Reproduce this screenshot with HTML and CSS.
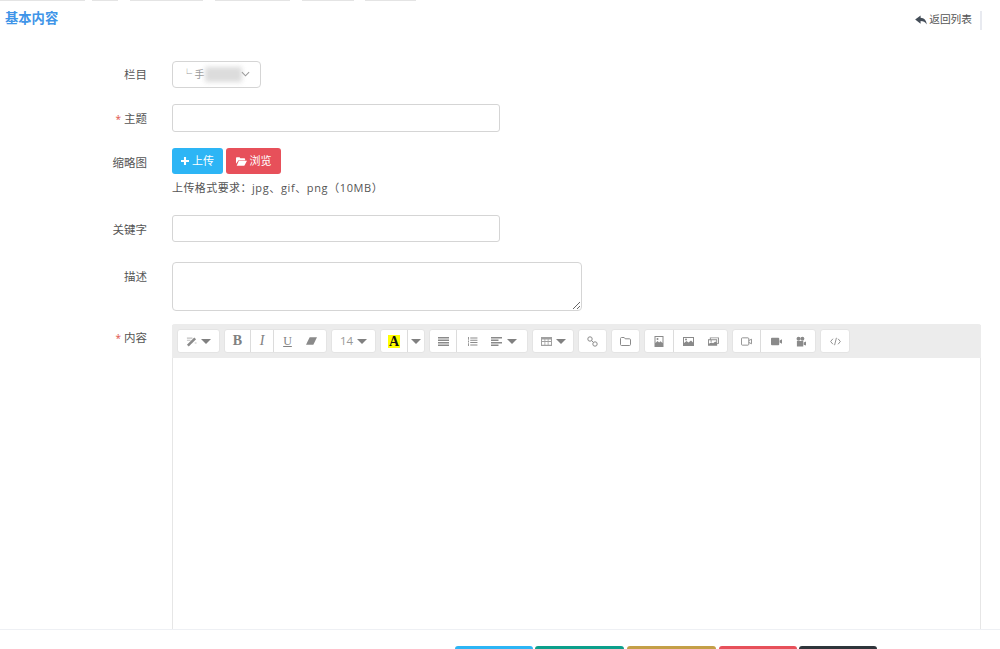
FILE: index.html
```html
<!DOCTYPE html>
<html lang="zh-CN">
<head>
<meta charset="utf-8">
<title>基本内容</title>
<link rel="stylesheet" href="styles.css">
</head>
<body>
<div class="page">
  <div class="tabs">
    <span class="tab t1"></span><span class="tab t2"></span><span class="tab t3"></span><span class="tab t4"></span><span class="tab t5"></span><span class="tab t6"></span>
  </div>
  <main class="main">
    <header class="head">
      <h1 class="title">基本内容</h1>
      <a class="back">
        <svg class="back-ico" viewBox="0 0 14 12"><path d="M6.500.5 0 5.500l6.500 5V7.300c3.200 0 5.500.8 7.300 4C13.500 6 10.500 3.500 6.500 3.300z"/></svg>
        <span>返回列表</span>
      </a>
    </header>
    <form class="form">
      <div class="row r-select">
        <label class="lbl">栏目</label>
        <div class="select">
          <span class="sel-text">└ 手</span><span class="smudge"></span>
          <svg class="chev" viewBox="0 0 10 6"><path d="M1 1l4 4 4-4"/></svg>
        </div>
      </div>
      <div class="row r-title">
        <label class="lbl"><i class="req">*</i> 主题</label>
        <input class="input" type="text">
      </div>
      <div class="row r-thumb">
        <label class="lbl">缩略图</label>
        <div class="thumb">
          <div class="btns">
            <button type="button" class="btn upload"><svg class="btn-ico" viewBox="0 0 10 10"><path d="M3.700 0h2.600v3.700H10v2.600H6.300V10H3.700V6.300H0V3.700h3.700z"/></svg>上传</button>
            <button type="button" class="btn browse"><svg class="btn-ico wide" viewBox="0 0 13 10"><path d="M0 1.200C0 .5.500 0 1.200 0h3l1 1.300h4.600c.6 0 1 .4 1 1V3.400H3L0 7.600zM3.400 4.200H13l-2.800 5.300-.5.5H.8z"/></svg>浏览</button>
          </div>
          <p class="help">上传格式要求：<span class="lat">jpg、gif、png（10MB）</span></p>
        </div>
      </div>
      <div class="row r-key">
        <label class="lbl">关键字</label>
        <input class="input" type="text">
      </div>
      <div class="row r-desc">
        <label class="lbl">描述</label>
        <textarea class="area"></textarea>
      </div>
      <div class="row r-editor">
        <label class="lbl"><i class="req">*</i> 内容</label>
        <div class="editor">
          <div class="toolbar">
            <div class="grp"><span class="tb w41 last">
              <svg class="ic wand" viewBox="0 0 12 11"><path d="M9 1 11 3 3 11 1 9z"/><path d="M1 1h6v1.500H1zM1 3.500h4v1.200H1zM9.500 6.500h2v1.200h-2z" opacity=".55"/></svg><svg class="caret" viewBox="0 0 10 5"><path d="M0 0h10L5 5z"/></svg></span></div>
            <div class="grp">
              <span class="tb w26"><span class="serif b">B</span></span>
              <span class="tb w23"><span class="serif it">I</span></span>
              <span class="tb w52 last spread"><span class="serif u">U</span><svg class="ic eraser" viewBox="0 0 12 8"><path d="M4 0h8L8 8H0z"/></svg></span>
            </div>
            <div class="grp"><span class="tb w43 last"><span class="size">14</span><svg class="caret" viewBox="0 0 10 5"><path d="M0 0h10L5 5z"/></svg></span></div>
            <div class="grp">
              <span class="tb w27"><span class="serif hl">A</span></span>
              <span class="tb w16 last"><svg class="caret" viewBox="0 0 10 5"><path d="M0 0h10L5 5z"/></svg></span>
            </div>
            <div class="grp">
              <span class="tb w27"><svg class="ic" viewBox="0 0 11 9"><path d="M0 0h11v1.500H0zM0 2.500h11V4H0zM0 5h11v1.500H0zM0 7.500h11V9H0z"/></svg></span>
              <span class="tb w70 last g8">
                <svg class="ic" viewBox="0 0 11 10"><path d="M3 .5h8v1.200H3zM3 3h8v1.200H3zM3 5.600h8v1.200H3zM3 8.200h8v1.200H3zM.6 0h1v3H.6zM.6 4h1v2H.6zM.6 7h1v3H.6z"/></svg>
                <span class="pair"><svg class="ic" viewBox="0 0 11 9"><path d="M0 0h11v1.400H0zM0 2.500h7.500v1.400H0zM0 5h11v1.400H0zM0 7.600h7.500V9H0z"/></svg><svg class="caret" viewBox="0 0 10 5"><path d="M0 0h10L5 5z"/></svg></span>
              </span>
            </div>
            <div class="grp"><span class="tb w40 last">
              <svg class="ic soft" viewBox="0 0 11 9"><path fill-rule="evenodd" d="M0 0h11v9H0zM1 2.500V4h2.500V2.500zM4.300 2.500V4h2.400V2.500zM7.500 2.500V4H10V2.500zM1 5v2.800h2.500V5zM4.300 5v2.800h2.400V5zM7.500 5v2.800H10V5z"/></svg><svg class="caret" viewBox="0 0 10 5"><path d="M0 0h10L5 5z"/></svg></span></div>
            <div class="grp"><span class="tb w27 last"><svg class="ic big" viewBox="0 0 11 11"><circle cx="3" cy="3" r="2.200" class="ln"/><circle cx="8" cy="8" r="2.200" class="ln"/><path d="M4.500 4.500l2 2" class="ln"/></svg></span></div>
            <div class="grp"><span class="tb w27 last"><svg class="ic big" viewBox="0 0 11 9"><path class="ln" d="M.5 1.500c0-.5.3-1 1-1h2.700l1 1.300h4.300c.6 0 1 .4 1 1v4.700c0 .6-.4 1-1 1h-8c-.6 0-1-.4-1-1z"/></svg></span></div>
            <div class="grp">
              <span class="tb w29"><svg class="ic tall" viewBox="0 0 9 11"><path fill-rule="evenodd" d="M0 0h9v11H0zM1 1v6l2-2 1.600 1.500L6 5.200 8 7V1z"/><circle cx="3" cy="3" r="1"/></svg></span>
              <span class="tb w53 last spread">
                <svg class="ic" viewBox="0 0 11 9"><path fill-rule="evenodd" d="M0 0h11v9H0zM1 1v5l2.500-2 2 1.500L8 3.500 10 5.500V1z"/><circle cx="3" cy="2.600" r="1"/></svg>
                <svg class="ic" viewBox="0 0 12 9"><path fill-rule="evenodd" d="M2 0h10v7H10v2H0V2h2zM3 1v1h7v4h1V1zM1 3v4l2.500-1.500 2 1 2.500-2 1 1V3z"/><circle cx="3.400" cy="4" r=".9"/></svg>
              </span>
            </div>
            <div class="grp">
              <span class="tb w28"><svg class="ic" viewBox="0 0 12 9"><path class="ln" d="M.5 1.500c0-.6.4-1 1-1h6c.6 0 1 .4 1 1v6c0 .6-.4 1-1 1h-6c-.6 0-1-.4-1-1zM8.500 3.500l3-1.500v5l-3-1.500"/></svg></span>
              <span class="tb w54 last spread">
                <svg class="ic" viewBox="0 0 12 9"><path d="M1 .5h7c.6 0 1 .4 1 1v6c0 .6-.4 1-1 1H1c-.6 0-1-.4-1-1v-6c0-.6.4-1 1-1zM9.500 3.500 12 2v5L9.500 5.500z"/></svg>
                <svg class="ic tall" viewBox="0 0 11 11"><circle cx="2.800" cy="2.500" r="2.200"/><circle cx="7" cy="2.500" r="2.200"/><path d="M1 5h7v6H1zM8.500 6.500 11 5.500V10L8.500 9z"/></svg>
              </span>
            </div>
            <div class="grp"><span class="tb w28 last"><svg class="ic big" viewBox="0 0 12 10"><path class="ln" d="M3.200 2 .7 5l2.500 3M8.800 2l2.500 3-2.500 3M7 1 5 9"/></svg></span></div>
          </div>
          <div class="ed-body"></div>
        </div>
      </div>
    </form>
  </main>
  <footer class="foot">
    <span class="act a1"></span><span class="act a2"></span><span class="act a3"></span><span class="act a4"></span><span class="act a5"></span>
  </footer>
</div>
</body>
</html>
```
FILE: styles.css
```css
* { box-sizing: border-box; }
html, body { margin: 0; height: 100%; background: #fff; overflow: hidden; }
body { font: 12px/1.4 "Open Sans", "Noto Sans CJK SC", sans-serif; color: #555; }
.page { height: 649px; display: flex; flex-direction: column; }

.tabs { height: 1px; flex: none; display: flex; }
.tab { height: 1px; background: #e4e4e4; }
.t1 { width: 85px; }
.t2 { width: 26px; margin-left: 7px; }
.t3 { width: 73px; margin-left: 12px; }
.t4 { width: 75px; margin-left: 12px; }
.t5 { width: 52px; margin-left: 12px; }
.t6 { width: 51px; margin-left: 11px; }

.main { flex: 1; min-height: 0; overflow: hidden; padding: 0 18px 0 5px; }
.head { display: flex; justify-content: space-between; height: 30px; margin-top: 9px; }
.title { margin: 0; font-size: 13.3px; line-height: 16px; font-weight: 700; color: #3f95e8; }
.back { display: flex; align-items: center; gap: 2px; height: 19px; margin-top: 1px; padding: 0 8px 2px 0; border-right: 2px solid #e8eaf0; font-size: 10.7px; color: #555; }
.back-ico { width: 12px; height: 10px; fill: #444d58; }

.form { display: flex; flex-direction: column; margin-top: 21px; }
.row { display: flex; align-items: flex-start; }
.lbl { flex: none; width: 142px; margin-right: 25px; text-align: right; font-size: 11.5px; line-height: 16px; color: #555; }
.req { font-style: normal; color: #e0524a; font-size: 10px; }
.r-select { height: 43px; }
.r-select .lbl { padding-top: 6px; }
.r-title { height: 44px; }
.r-title .lbl { padding-top: 7px; }
.r-thumb { height: 67px; }
.r-thumb .lbl { padding-top: 7px; }
.r-key { height: 47px; }
.r-key .lbl { padding-top: 7px; }
.r-desc { height: 62px; }
.r-desc .lbl { padding-top: 7px; }
.r-editor { flex: 1; }
.r-editor .lbl { padding-top: 6px; }

.select { position: relative; width: 89px; height: 27px; padding-left: 9px; border: 1px solid #d5d5d5; border-radius: 4px; font-size: 10px; line-height: 25px; color: #999; background: #fff; }
.smudge { position: absolute; left: 32px; top: 5px; width: 37px; height: 15px; background: #dcdcdc; filter: blur(2.5px); }
.chev { position: absolute; right: 10px; top: 9px; width: 9px; height: 6px; fill: none; stroke: #999; stroke-width: 1.200; }

.input { display: block; width: 328px; height: 28px; border: 1px solid #d5d5d5; border-radius: 3px; background: #fff; padding: 0; }
.r-key .input { height: 27px; }
.area { display: block; width: 410px; height: 49px; border: 1px solid #d5d5d5; border-radius: 4px; background: #fff; padding: 0; margin: 0; resize: vertical; }

.btns { display: flex; gap: 3px; }
.btn { display: flex; align-items: center; justify-content: center; gap: 3px; height: 26px; padding: 0; border: 0; border-radius: 3px; font: inherit; font-size: 11px; color: #fff; }
.upload { width: 51px; background: #2db5f5; }
.browse { width: 55px; background: #e7505a; }
.btn-ico { width: 8px; height: 8px; fill: #fff; }
.btn-ico.wide { width: 11px; height: 9px; }
.help { margin: 6px 0 0; font-size: 11px; line-height: 16px; letter-spacing: .42px; color: #555; white-space: nowrap; }
.lat { letter-spacing: .62px; }

.editor { flex: none; width: 809px; height: 306px; border: 1px solid #e6e6e6; border-top: 0; border-bottom: 0; border-radius: 3px 3px 0 0; display: flex; flex-direction: column; }
.toolbar { height: 34px; flex: none; display: flex; gap: 4px; padding: 5px 0 0 5px; margin: 0 -1px; background: #ececec; border-radius: 3px 3px 0 0; }
.grp { display: flex; height: 24px; border-radius: 3px; background: #fff; border: 1px solid #e4e4e4; overflow: hidden; }
.tb { display: flex; align-items: center; justify-content: center; gap: 4px; height: 22px; border-right: 1px solid #dcdcdc; color: #777; flex: none; }
.tb.last { border-right: 0; }
.spread { gap: 14px; }
.g8 { gap: 13px; }
.pair { display: flex; align-items: center; gap: 5px; }
.w16 { width: 16px; } .w23 { width: 23px; } .w26 { width: 26px; } .w27 { width: 27px; } .w28 { width: 28px; } .w29 { width: 29px; }
.w40 { width: 40px; } .w41 { width: 41px; } .w43 { width: 43px; } .w52 { width: 52px; } .w53 { width: 53px; } .w54 { width: 54px; } .w70 { width: 70px; }
.ic { width: 11px; height: 9px; fill: #8a8a8a; flex: none; }
.ic.soft { fill: #a0a0a0; }
.ic.big { height: 11px; }
.ic.tall { height: 11px; width: 10px; }
.ic.wand { height: 11px; }
.ic.eraser { height: 8px; }
.ln { fill: none; stroke: #8a8a8a; stroke-width: 1; }
.caret { width: 10px; height: 5px; fill: #808080; flex: none; }
.serif { font-family: "Liberation Serif", serif; font-size: 14px; line-height: 16px; color: #808080; }
.b { font-weight: 700; }
.it { font-style: italic; }
.u { text-decoration: underline; font-size: 12px; }
.hl { font-weight: 700; color: #111; background: #ff0; line-height: 13px; padding: 0 1px; }
.size { font-size: 11.5px; color: #999; }
.ed-body { flex: 1; }

.foot { flex: none; height: 20px; border-top: 1px solid #eef0f4; display: flex; gap: 2px; padding: 16px 0 0 455px; background: #fff; }
.act { display: block; height: 4px; border-radius: 3px 3px 0 0; }
.a1 { width: 78px; background: #2db5f5; }
.a2 { width: 89px; background: #0c9f8b; }
.a3 { width: 89px; margin-left: 1px; background: #c49f47; }
.a4 { width: 78px; margin-left: 1px; background: #e7505a; }
.a5 { width: 78px; background: #2f353b; }
```
